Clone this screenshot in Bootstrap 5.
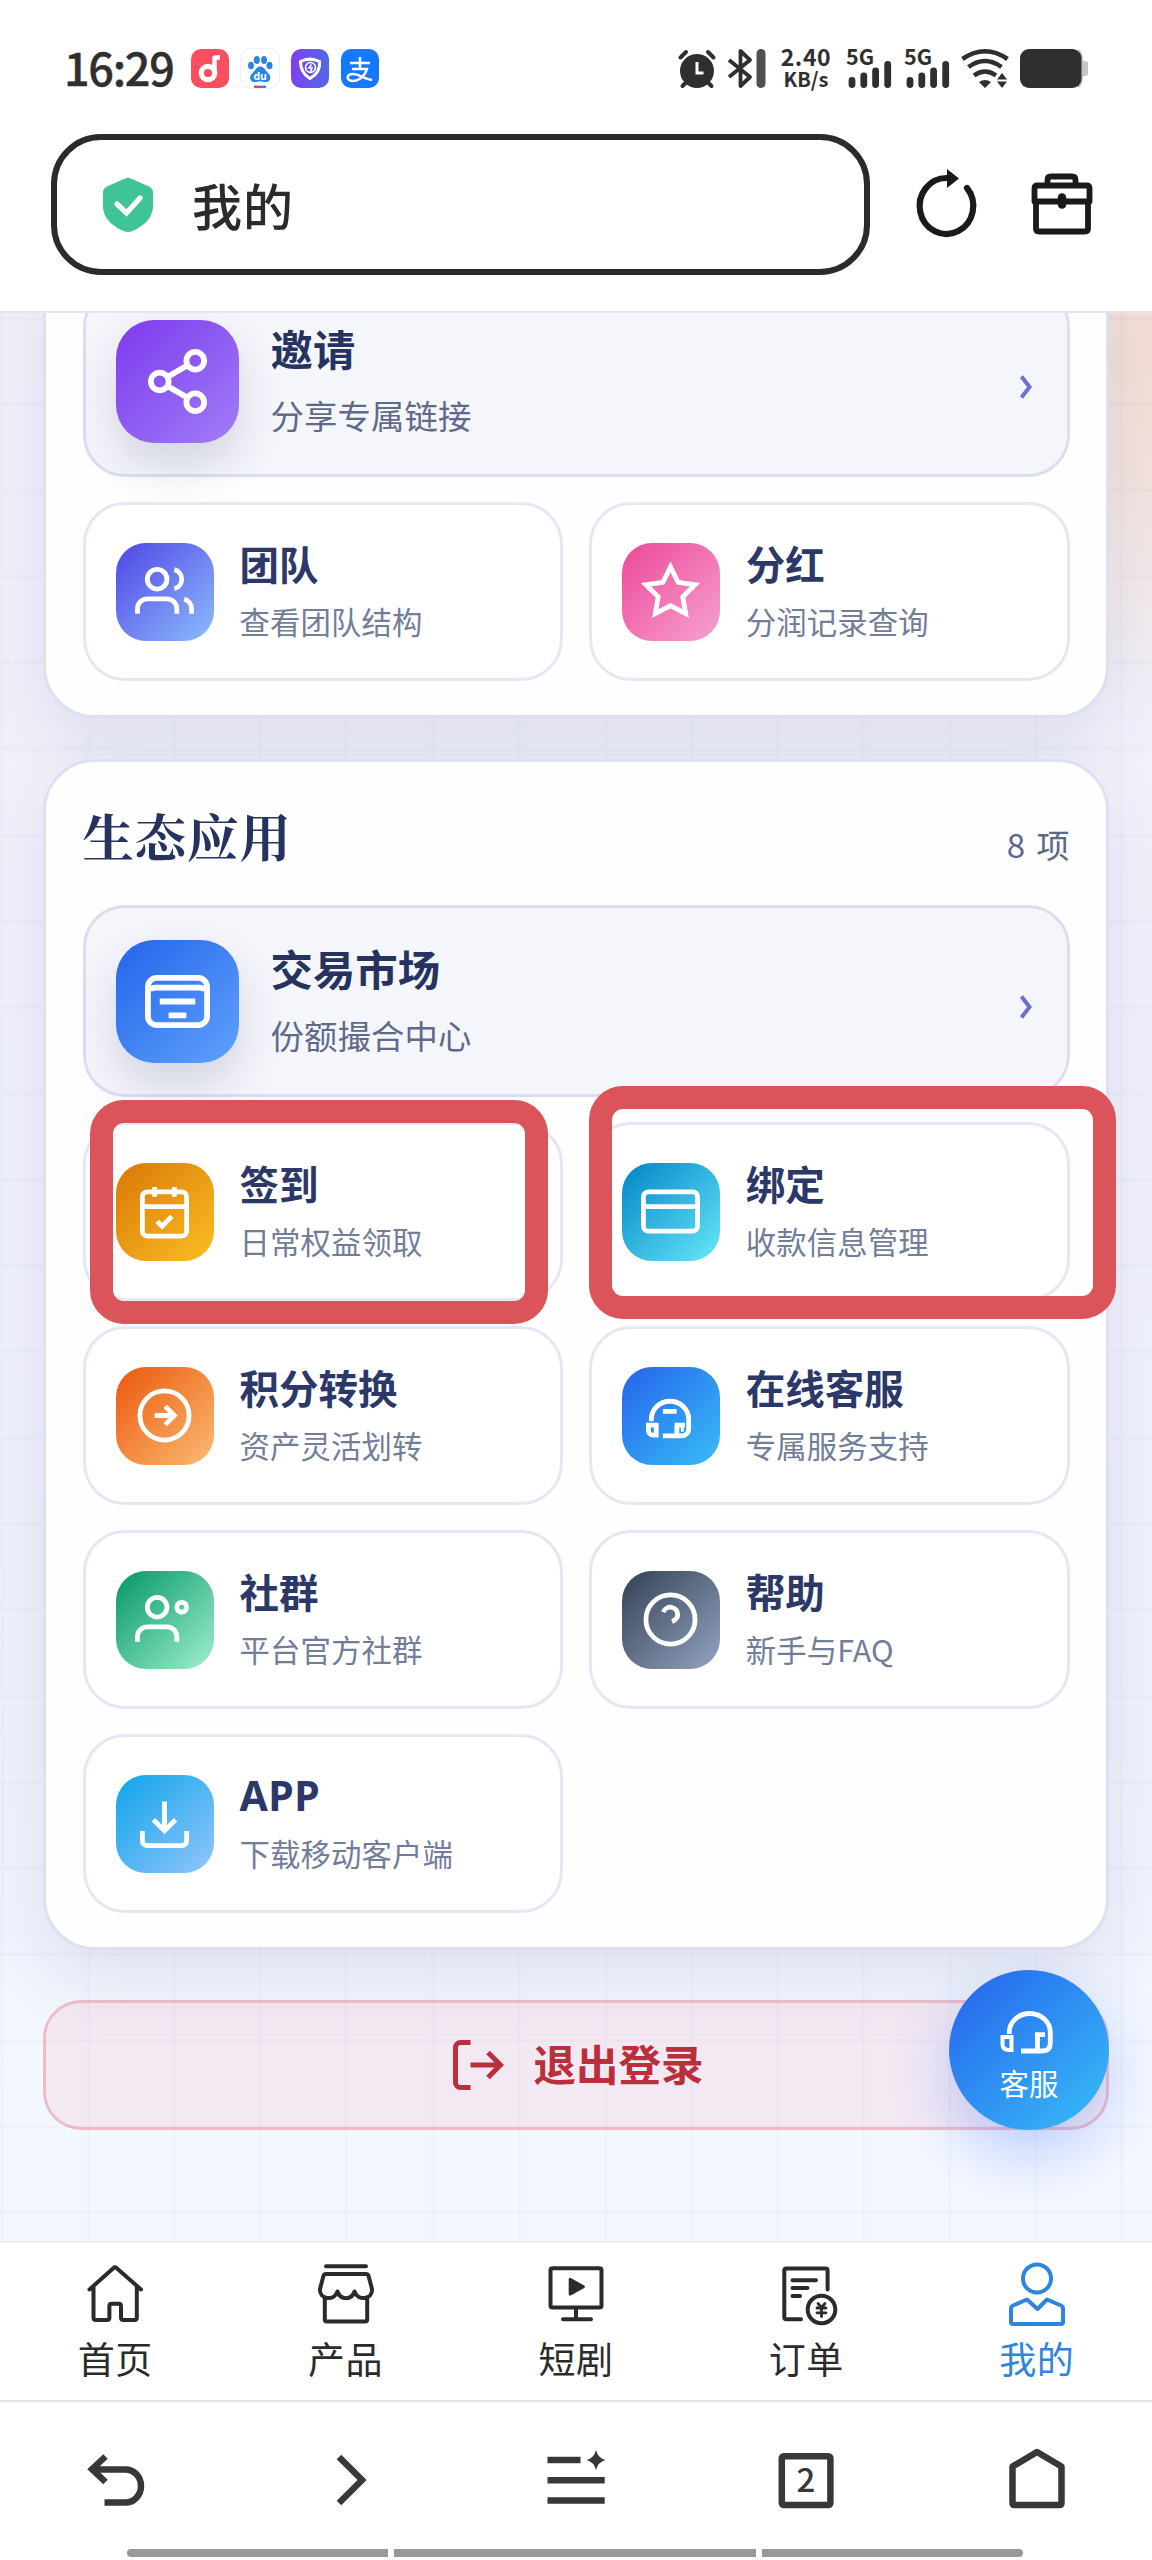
<!DOCTYPE html>
<html lang="zh-CN">
<head>
<meta charset="utf-8">
<meta name="viewport" content="width=device-width, initial-scale=1">
<title>我的</title>
<link href="https://cdn.jsdelivr.net/npm/bootstrap@5.3.0/dist/css/bootstrap.min.css" rel="stylesheet">
<style>
body{width:1152px;height:2560px;overflow:hidden;background:#fff;color:#2b2b2b;font-family:"Noto Sans CJK SC","Noto Sans",sans-serif}
svg{display:block;flex:none;fill:none;stroke:currentColor;overflow:visible}
.solid{fill:currentColor;stroke:none}
/* status bar */
.status-bar{height:134px;padding:49px 64px 0 64px}
.clock{font-size:45px;font-weight:500;line-height:39px;letter-spacing:-1.3px;width:127px;color:#2f2f2f;-webkit-text-stroke:.4px #2f2f2f;margin-top:-2px}
.app-ico{width:38px;height:39px;border-radius:10px;margin-right:12px}
.speed{width:52px;font-weight:700;font-size:23px;line-height:22px;text-align:center;letter-spacing:.6px;margin-top:-4px}
.speed div+div{font-size:20px;line-height:23px;letter-spacing:0}
.sig text{font:700 21.5px "Noto Sans CJK SC",sans-serif;fill:#2f2f2f;stroke:none}
/* address bar */
.addr-row{height:141px;padding-left:51px}
.addr{width:819px;height:141px;border:6.5px solid #2b2b2b;border-radius:50px;padding-left:46px}
.addr span{font-size:50px;font-weight:500;line-height:60px;letter-spacing:1px;margin-left:39px;position:relative;top:-1px}
.top-chrome{height:313px;border-bottom:2px solid #e6e6ee}
/* page */
.page{height:1928px;padding:0 43px 111px;background:
 repeating-linear-gradient(90deg,rgba(120,130,190,.04) 0 3px,transparent 3px 86.1px) 1px 0,
 repeating-linear-gradient(180deg,rgba(120,130,190,.04) 0 3px,transparent 3px 86.1px) 0 4px,
 radial-gradient(ellipse 330px 430px at 1200px -20px,#f3dccf 0,rgba(243,222,214,.8) 45%,rgba(240,238,250,0) 100%),
 linear-gradient(180deg,#f1f1fb 0,#f0f1fb 45%,#f0f2fc 75%,#f3f7ff 92%,#f3f7ff 100%)}
.panel{background:#fefeff;border:3px solid #dfdff3;border-radius:52px;padding:0 36.500px;box-shadow:0 26px 70px rgba(50,60,100,.1)}
.panel-a{padding-top:34px;padding-bottom:34px}
.panel-b{height:1191px;margin-top:41px}
.panel-b .hd{height:143px;padding-top:29px}
.hd h2{font-family:"Noto Serif CJK SC","Noto Serif SC","Source Han Serif SC","Noto Sans CJK SC",serif;font-size:51.5px;font-weight:700;line-height:88px;letter-spacing:.8px;color:#27335f}
.hd span{font-size:33px;line-height:40px;color:#5c6788;margin-top:33px;word-spacing:4px}
.tiles{display:grid;grid-template-columns:1fr 1fr;gap:25px 25.5px}
.tile{height:179px;border:3px solid #e5e7f4;border-radius:42px;padding-left:30px;background:#fff}
.tile b{display:block;font-size:39.5px;line-height:46px;color:#2b3868;font-weight:700}
.tile small{display:block;font-size:30.4px;line-height:44px;margin-top:13px;color:#727d99;letter-spacing:.1px}
.tile .txt{margin-left:26px}
.tile .latin{font-family:"Noto Sans",sans-serif;font-size:41px;letter-spacing:.5px}
.tile.wide{grid-column:1/3;height:192px;background:#f5f6fc;border-color:#dcdef0;padding-right:35px}
.wide b{font-size:42.4px;color:#26325f}
.wide small{font-size:33.4px;line-height:46px;margin-top:21px;color:#5f6a8a}
.wide .txt{margin-left:32px}
.wide .go{margin-top:11px;color:#6a70cc}
.ico{width:98px;height:98px;border-radius:30px;color:#fff}
.ico svg{width:59px;height:59px;stroke-width:1.95}
.wide .ico{width:123px;height:123px;border-radius:38px;box-shadow:0 22px 44px rgba(40,50,90,.17)}
.wide .ico svg{width:71px;height:71px}
.g-violet{background:linear-gradient(135deg,#7c3aed,#a07df8)}
.g-indigo{background:linear-gradient(135deg,#4f46e5,#8cbcfc)}
.g-pink{background:linear-gradient(135deg,#ec4899,#f7a2cf)}
.g-blue{background:linear-gradient(135deg,#2563eb,#5fa3fb)}
.g-gold{background:linear-gradient(135deg,#d97706,#fbbf24)}
.g-cyan{background:linear-gradient(135deg,#0284c7,#67e8f9)}
.g-orange{background:linear-gradient(135deg,#ea580c,#fdba74)}
.g-azure{background:linear-gradient(135deg,#2563eb,#38bdf8)}
.g-green{background:linear-gradient(135deg,#059669,#a0f0cb)}
.g-slate{background:linear-gradient(135deg,#334155,#94a3c0)}
.g-sky{background:linear-gradient(135deg,#0ea5e9,#93c5fd)}
.logout{height:130px;margin-top:50px;border:3px solid rgba(229,95,110,.32);border-radius:38px;background:rgba(246,140,160,.13);color:#b92f3c;font-size:42.5px;font-weight:700;gap:25px}
.logout span{line-height:50px;position:relative;top:-2px}
/* overlays */
.marker{position:absolute;border:23px solid #db5459;border-radius:34px}
.fab{position:absolute;left:949px;top:1970px;width:160px;height:160px;border-radius:50%;background:linear-gradient(135deg,#2563eb,#38bdf8);box-shadow:0 24px 60px rgba(60,110,250,.3);color:#fff;padding-top:38px}
.fab span{font-size:29.5px;line-height:40px;margin-top:4px}
/* bars */
.tabs{height:159px;border-top:2px solid #ececf1;padding-top:17px;background:#fff}
.tabs a,.browser a{width:230.4px;color:inherit;text-decoration:none}
.tabs svg{stroke-width:4;stroke-linecap:round;stroke-linejoin:round}
.tabs span{font-size:37px;line-height:44px;margin-top:8px;letter-spacing:.5px}
.tabs .on{color:#2e86dc}
.browser{height:160px;border-top:2px solid #e4e4e4;padding-top:46px;color:#383838;background:#fff}
.browser svg{stroke-width:6.5}
.bars{padding:36.5px 0 0 127px;gap:6px}
.bars i{height:8.5px;background:#999;width:261px}
</style>
</head>
<body class="position-relative d-flex flex-column">

<header class="top-chrome flex-shrink-0">
  <div class="status-bar d-flex align-items-start">
    <div class="clock">16:29</div>
    <svg class="app-ico" style="background:#fb4f60" viewBox="0 0 38 39"><circle cx="17" cy="24" r="6.7" stroke="#fff" stroke-width="5.2"/><path d="M23.500 26V9.500q0-1 1-1H29" stroke="#fff" stroke-width="4.500"/></svg>
    <svg class="app-ico" style="box-shadow:0 0 0 1px #f1f1f1" viewBox="0 0 38 39"><g fill="#2a86e0" stroke="none"><ellipse cx="10" cy="16.500" rx="3" ry="3.800"/><ellipse cx="15.800" cy="11" rx="3" ry="3.900"/><ellipse cx="23" cy="11" rx="3" ry="3.900"/><ellipse cx="28.500" cy="16.500" rx="3" ry="3.800"/><path d="M19.300 17.500c4 0 5 4 7.500 6.300 4.500 4 2.500 9.200-1.500 9.200-3 0-4-.8-6-.8s-3.500.8-6 .8c-4.500 0-6-5.200-1.500-9.200 2.500-2.300 3.500-6.300 7.500-6.300z"/></g><text x="19.200" y="30.500" text-anchor="middle" style="font:700 10.500px 'Noto Sans'" fill="#fff" stroke="none">du</text><path d="M13 37.800h6" stroke="#e8405a" stroke-width="2.400"/><path d="M19 37.800h6" stroke="#2a86e0" stroke-width="2.400"/></svg>
    <svg class="app-ico" style="background:linear-gradient(90deg,#8040f0,#5068e4)" viewBox="0 0 38 39"><path d="M9.500 12.500c6-3 13-3 19 0 1 8-2.500 13-9.500 17-6-3.500-9.500-8.500-9.500-17z" stroke="#fff" stroke-width="3"/><circle cx="19.500" cy="18.500" r="5" stroke="#fff" stroke-width="1.600"/><path d="M20.500 15.500l-2.500 3.500h3l-1.500 4" stroke="#fff" stroke-width="1.600"/></svg>
    <svg class="app-ico" style="background:#1677ff" viewBox="0 0 38 39"><path d="M9 14h20M19 8v12M11 20h15c-2 7-8 12-14 12-7 0-7-7 0-7 7 0 10 5 19 6" stroke="#fff" stroke-width="2.600"/></svg>
    <div class="d-flex ms-auto" style="color:#2f2f2f">
      <svg width="38" height="39" viewBox="0 0 38 39" stroke-width="4" stroke-linecap="round"><circle class="solid" cx="19" cy="22" r="17"/><path d="M2.500 8.500L8 3M35.500 8.500L30 3M4.500 37l4-4M33.500 37l-4-4"/><path d="M19 13v11h6.500" stroke="#fff" stroke-width="3" stroke-linecap="butt"/></svg>
      <svg width="40" height="39" viewBox="0 0 40 39" style="margin-left:11px" stroke-width="3.800"><path d="M2 11L23 28 13.500 37V2L23 11 2 28" stroke-linejoin="round"/><path d="M34 4.500v30" stroke="#505050" stroke-width="9" stroke-linecap="round"/></svg>
      <div class="speed" style="margin-left:13px"><div>2.40</div><div>KB/s</div></div>
      <svg class="sig" width="46" height="39" viewBox="0 0 46 39" style="margin-left:14px"><text x="0" y="15.500">5G</text><path d="M6 31.500v4M17.800 27v8.500M29.600 22v13.500M41.700 15.500v20" stroke-width="6.800" stroke-linecap="round"/></svg>
      <svg class="sig" width="46" height="39" viewBox="0 0 46 39" style="margin-left:12px"><text x="0" y="15.500">5G</text><path d="M6 31.500v4M17.800 27v8.500M29.600 22v13.500M41.700 15.500v20" stroke-width="6.800" stroke-linecap="round"/></svg>
      <svg width="48" height="39" viewBox="0 0 48 39" style="margin-left:11px" stroke-width="4.600"><path d="M1.500 10Q24-5.500 46.500 10M7.500 18Q24 6 40.500 18M13 26.500Q24 18.500 35 26.500"/><path class="solid" d="M18 33q6-4 12 0l-6 6zM36 30.500l5-6.500 5 6.500zM36 32.500h10l-5 6.500z"/></svg>
      <svg width="68" height="39" viewBox="0 0 68 39" style="margin-left:11px"><path d="M58 0q5 2 5 12 5 0 5 2v11q0 2-5 2 0 10-5 12z" fill="#c4c4c4" stroke="none"/><rect class="solid" width="61.500" height="39" rx="9"/></svg>
    </div>
  </div>
  <div class="addr-row d-flex align-items-center">
    <div class="addr d-flex align-items-center">
      <svg width="50" height="54" viewBox="0 0 50 54"><path d="M25 0q2 0 4 1l17 7.500q4 2 4 6V28c0 13-11 21-21 25.200q-4 1.600-8 0C11 49 0 41 0 28V14.500q0-4 4-6L21 1q2-1 4-1z" fill="#3fc495" stroke="none"/><path d="M14 26l9.500 9L37 20" stroke="#fff" stroke-width="5.200" stroke-linecap="round"/></svg>
      <span>我的</span>
    </div>
    <svg width="62" height="68" viewBox="0 0 62 68" style="margin-left:46px;margin-top:-5px;color:#1a1a1a" stroke-width="6.200"><path d="M31 10A26.800 28 0 1 0 51 20" stroke-linecap="round"/><path class="solid" d="M31 1l12 9.500L31 20z"/></svg>
    <svg width="62" height="62" viewBox="0 0 62 62" style="margin-left:53px;margin-top:-2px;color:#1a1a1a" stroke-width="5.800" stroke-linejoin="round"><path d="M16.500 12V7q0-3.500 3.500-3.500H41q3.500 0 3.500 3.500V12M3.500 28.500V15.500q0-3 3-3h49q3 0 3 3V28.500zM5 28.500v27q0 3 3 3H54q3 0 3-3v-27"/><path d="M31 24.500v7" stroke-width="8.500" stroke-linecap="round"/></svg>
  </div>
</header>

<main class="page flex-shrink-0 overflow-hidden d-flex flex-column justify-content-end">
  <section class="panel panel-a flex-shrink-0">
    <div class="tiles">
      <div class="tile wide d-flex align-items-center">
        <div class="ico g-violet d-flex align-items-center justify-content-center"><svg viewBox="0 0 24 24"><circle cx="18" cy="5" r="3"/><circle cx="6" cy="12" r="3"/><circle cx="18" cy="19" r="3"/><path d="M8.590 13.510l6.830 3.980M15.410 6.510l-6.820 3.980"/></svg></div>
        <div class="txt"><b>邀请</b><small>分享专属链接</small></div>
        <svg class="go ms-auto" width="12" height="24" viewBox="0 0 12 24" stroke-width="4"><path d="M1.500 1.500L9.500 12 1.500 22.500"/></svg>
      </div>
      <div class="tile d-flex align-items-center">
        <div class="ico g-indigo d-flex align-items-center justify-content-center"><svg viewBox="0 0 24 24"><path d="M17 21v-2a4 4 0 0 0-4-4H5a4 4 0 0 0-4 4v2M23 21v-2a4 4 0 0 0-3-3.870M16 3.130a4 4 0 0 1 0 7.750"/><circle cx="9" cy="7" r="4"/></svg></div>
        <div class="txt"><b>团队</b><small>查看团队结构</small></div>
      </div>
      <div class="tile d-flex align-items-center">
        <div class="ico g-pink d-flex align-items-center justify-content-center"><svg viewBox="0 0 24 24"><path d="M12 2l3.090 6.260L22 9.270l-5 4.870 1.180 6.880L12 17.770l-6.180 3.250L7 14.140 2 9.270l6.910-1.010z"/></svg></div>
        <div class="txt"><b>分红</b><small>分润记录查询</small></div>
      </div>
    </div>
  </section>

  <section class="panel panel-b flex-shrink-0">
    <div class="hd d-flex justify-content-between align-items-start"><h2 class="m-0">生态应用</h2><span>8 项</span></div>
    <div class="tiles">
      <div class="tile wide d-flex align-items-center">
        <div class="ico g-blue d-flex align-items-center justify-content-center"><svg viewBox="0 0 24 24"><rect x="2" y="4" width="20" height="16" rx="3"/><path d="M3 8.500Q3 7.300 4.500 7.300h15q1.500 0 1.500 1.200M6 12h12M9 16.700h6"/></svg></div>
        <div class="txt"><b>交易市场</b><small>份额撮合中心</small></div>
        <svg class="go ms-auto" width="12" height="24" viewBox="0 0 12 24" stroke-width="4"><path d="M1.500 1.500L9.500 12 1.500 22.500"/></svg>
      </div>
      <div class="tile d-flex align-items-center">
        <div class="ico g-gold d-flex align-items-center justify-content-center"><svg viewBox="0 0 24 24"><rect x="3" y="4" width="18" height="18" rx="2"/><path d="M16 2v4M8 2v4M3 10h18M9 16l2 2 4-4"/></svg></div>
        <div class="txt"><b>签到</b><small>日常权益领取</small></div>
      </div>
      <div class="tile d-flex align-items-center">
        <div class="ico g-cyan d-flex align-items-center justify-content-center"><svg viewBox="0 0 24 24"><rect x="1" y="4" width="22" height="16" rx="2"/><path d="M1 10h22"/></svg></div>
        <div class="txt"><b>绑定</b><small>收款信息管理</small></div>
      </div>
      <div class="tile d-flex align-items-center">
        <div class="ico g-orange d-flex align-items-center justify-content-center"><svg viewBox="0 0 24 24"><circle cx="12" cy="12" r="10"/><path d="M8 12h8M12.300 8.300L16 12l-3.700 3.700"/></svg></div>
        <div class="txt"><b>积分转换</b><small>资产灵活划转</small></div>
      </div>
      <div class="tile d-flex align-items-center">
        <div class="ico g-azure d-flex align-items-center justify-content-center"><svg viewBox="0 0 24 24"><path d="M4.200 14.300v-.8a7.600 7.300 0 0 1 15.200 0v4a2.800 2.800 0 0 1-2.800 2.800H8.900M8.900 10.300h5.600M13.700 15.900h4.200M14.600 15.900v4.400M3 15.900h3.200V20H5a2 2 0 0 1-2-2z"/><path d="M16.800 16v2.600" stroke-width="1.200"/></svg></div>
        <div class="txt"><b>在线客服</b><small>专属服务支持</small></div>
      </div>
      <div class="tile d-flex align-items-center">
        <div class="ico g-green d-flex align-items-center justify-content-center"><svg viewBox="0 0 24 24"><path d="M17 21v-2a4 4 0 0 0-4-4H5a4 4 0 0 0-4 4v2"/><circle cx="9" cy="7" r="4"/><circle cx="19" cy="7" r="2"/></svg></div>
        <div class="txt"><b>社群</b><small>平台官方社群</small></div>
      </div>
      <div class="tile d-flex align-items-center">
        <div class="ico g-slate d-flex align-items-center justify-content-center"><svg viewBox="0 0 24 24"><circle cx="12" cy="12" r="10"/><path d="M9.090 9a3 3 0 0 1 5.830 1c0 2-2.300 2.800-2.300 2.800"/></svg></div>
        <div class="txt"><b>帮助</b><small>新手与FAQ</small></div>
      </div>
      <div class="tile d-flex align-items-center">
        <div class="ico g-sky d-flex align-items-center justify-content-center"><svg viewBox="0 0 24 24"><path d="M21 15v4a2 2 0 0 1-2 2H5a2 2 0 0 1-2-2v-4M7.500 10.500L12 15l4.500-4.500M12 15V3"/></svg></div>
        <div class="txt"><b class="latin">APP</b><small>下载移动客户端</small></div>
      </div>
    </div>
  </section>

  <div class="logout d-flex align-items-center justify-content-center flex-shrink-0">
    <svg width="60" height="60" viewBox="0 0 24 24" stroke-width="2"><path d="M9 21H5a2 2 0 0 1-2-2V5a2 2 0 0 1 2-2h4M16 17l5-5-5-5M21 12H9"/></svg>
    <span>退出登录</span>
  </div>
</main>

<nav class="tabs d-flex flex-shrink-0">
  <a class="d-flex flex-column align-items-center"><svg width="60" height="68" viewBox="0 0 60 68"><path d="M4.500 29.500L28.500 8q1.500-1.300 3 0L56 29.500M8.500 27V57.500q0 2.500 2.500 2.500H22q2.400 0 2.400-2.500V46q0-2.300 2.300-2.300h7q2.300 0 2.300 2.300V57.500q0 2.500 2.400 2.500H49.300q2.500 0 2.500-2.500V27"/></svg><span>首页</span></a>
  <a class="d-flex flex-column align-items-center"><svg width="60" height="68" viewBox="0 0 60 68"><path d="M10 6.300H50M10 14H50q2 0 2.600 2L56 29c1 10-14 13-17.500 2.500-3 9-14 9-17 0C18 42 3 39 4 29L7.400 16q.6-2 2.600-2zM8.800 38V59.500q0 2 2 2H49.200q2 0 2-2V38"/></svg><span>产品</span></a>
  <a class="d-flex flex-column align-items-center"><svg width="60" height="68" viewBox="0 0 60 68"><rect x="4.500" y="8.300" width="51" height="39.300" rx="2"/><path d="M30 48V59.300M17 59.300H45"/><path class="solid" d="M22.700 19.500q0-2.500 2.500-1.300l12.500 7q2.500 1.500 0 3l-12.500 7q-2.500 1.200-2.500-1.300z"/></svg><span>短剧</span></a>
  <a class="d-flex flex-column align-items-center"><svg width="60" height="68" viewBox="0 0 60 68"><path d="M51.600 29.500V10.500q0-2-2-2H10.300q-2 0-2 2V57.300q0 2 2 2H25M16.500 20.300H40M16.500 28H31.500M16.500 36H24"/><circle cx="45.500" cy="49.500" r="13.800"/><path d="M42 43.500l3.500 4 3.500-4M41 48h9M41 52.800h9M45.500 47.500v9" stroke-width="2.800"/></svg><span>订单</span></a>
  <a class="on d-flex flex-column align-items-center"><svg width="60" height="68" viewBox="0 0 60 68"><circle cx="30" cy="18.400" r="14"/><path d="M20 39.500L6 45.500q-2 1-2 3V62q0 2 2 2H54q2 0 2-2V48.500q0-2-2-3L40 39.500 30.500 49z"/></svg><span>我的</span></a>
</nav>

<footer class="browser flex-shrink-0">
  <div class="d-flex">
    <a class="d-flex justify-content-center"><svg width="64" height="64" viewBox="0 0 64 64"><path d="M8 21.500H42.500a15.500 16.500 0 0 1 0 33H21.500M22.500 8.500L9 21.200 22.500 34"/></svg></a>
    <a class="d-flex justify-content-center"><svg width="64" height="64" viewBox="0 0 64 64"><path d="M25 9L48 32 25 55"/></svg></a>
    <a class="d-flex justify-content-center"><svg width="64" height="64" viewBox="0 0 64 64"><path d="M3.500 12H36.500M3.500 32.300H60.700M3.500 52.600H60.700"/><path class="solid" d="M52 2q2 8 9.500 10-7.500 2-9.500 10-2-8-9.500-10 7.500-2 9.500-10z"/></svg></a>
    <a class="d-flex justify-content-center"><svg width="64" height="64" viewBox="0 0 64 64"><rect x="7.800" y="8.200" width="48.600" height="48.800" rx="2"/><text class="solid" x="32" y="44" text-anchor="middle" style="font:500 33px 'Noto Sans CJK SC',sans-serif">2</text></svg></a>
    <a class="d-flex justify-content-center"><svg width="64" height="64" viewBox="0 0 64 64" stroke-linejoin="round"><path d="M7.500 18.500L32 4 56.500 18.500V55q0 2-2 2h-45q-2 0-2-2z"/></svg></a>
  </div>
  <div class="bars d-flex"><i class="rounded-start-pill"></i><i style="width:362px"></i><i class="rounded-end-pill"></i></div>
</footer>

<!-- highlight frames and floating button -->
<div class="marker" style="left:90px;top:1100px;width:458px;height:224px"></div>
<div class="marker" style="left:589px;top:1086px;width:527px;height:233px"></div>
<div class="fab d-flex flex-column align-items-center">
  <svg width="60" height="50" viewBox="0 0 60 50" stroke-width="4.800"><path d="M10.300 26V24a20.500 18.500 0 0 1 41 0V35q0 8-8 8H22M36 26.700H46M38.500 26.700V43"/><path d="M3.500 29H12.500V42H10q-6.500 0-6.500-6z" stroke-width="4"/></svg>
  <span>客服</span>
</div>

<script src="https://cdn.jsdelivr.net/npm/bootstrap@5.3.0/dist/js/bootstrap.bundle.min.js"></script>
</body>
</html>
